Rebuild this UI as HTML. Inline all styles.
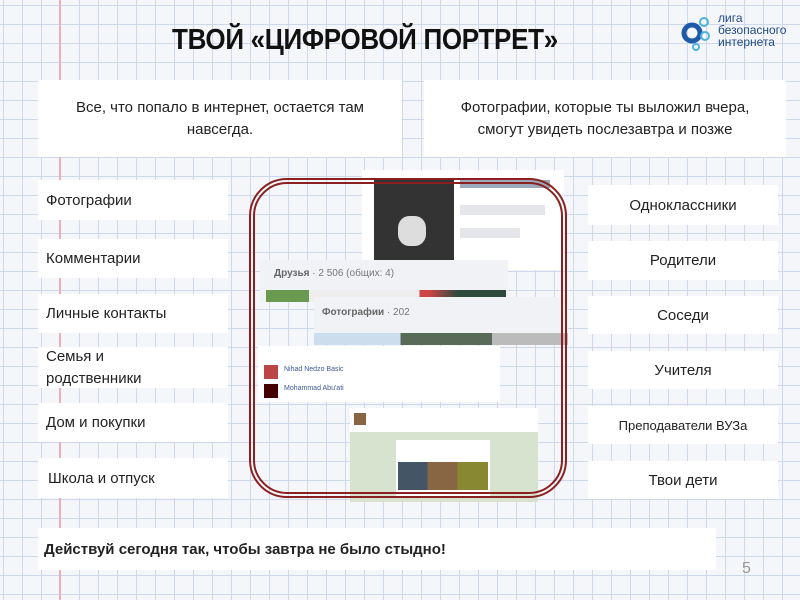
<!DOCTYPE html>
<html><head><meta charset="utf-8"><style>
body{margin:0;width:800px;height:600px;overflow:hidden;position:relative;font-family:"Liberation Sans",sans-serif;
background-color:#f5f6fa;
background-image:linear-gradient(90deg,transparent 59px,#eab0b8 59px,#eab0b8 61px,transparent 61px),
linear-gradient(#cdd8ea 1px,transparent 1px),linear-gradient(90deg,#cdd8ea 1px,transparent 1px);
background-size:800px 600px,19px 19px,19px 19px;background-position:0 0,0 5px,3px 0;}
.b{position:absolute;background:#fff;font-size:15px;color:#222;box-sizing:border-box;}
.l{left:38px;width:190px;padding-left:8px;display:flex;align-items:center;}
.r{left:588px;width:190px;display:flex;align-items:center;justify-content:center;}
.t{top:80px;height:77px;display:flex;align-items:center;justify-content:center;text-align:center;line-height:22px;}
h1{position:absolute;left:172px;top:22px;margin:0;font-size:26px;font-weight:bold;color:#111;transform:scaleY(1.12);transform-origin:left top;letter-spacing:-0.3px}
</style></head><body>
<h1>ТВОЙ «ЦИФРОВОЙ ПОРТРЕТ»</h1>
<svg style="position:absolute;left:680px;top:12px" width="36" height="42"><circle cx="12" cy="21" r="8" fill="none" stroke="#1f5aa6" stroke-width="5"/><circle cx="24" cy="10" r="4" fill="none" stroke="#4fb3e0" stroke-width="2"/><circle cx="25" cy="24" r="4" fill="none" stroke="#4fb3e0" stroke-width="2"/><circle cx="16" cy="35" r="3" fill="none" stroke="#4fb3e0" stroke-width="2"/></svg>
<div style="position:absolute;left:718px;top:12px;font-size:12px;line-height:12px;color:#1f4a86">лига<br>безопасного<br>интернета</div>
<div class="b t" style="left:38px;width:364px">Все, что попало в интернет, остается там<br>навсегда.</div>
<div class="b t" style="left:424px;width:362px">Фотографии, которые ты выложил вчера,<br>смогут увидеть послезавтра и позже</div>
<div class="b l" style="top:180px;height:40px">Фотографии</div>
<div class="b l" style="top:239px;height:39px">Комментарии</div>
<div class="b l" style="top:294px;height:39px">Личные контакты</div>
<div class="b l" style="top:347px;height:41px;line-height:22px">Семья и<br>родственники</div>
<div class="b l" style="top:403px;height:39px">Дом и покупки</div>
<div class="b l" style="top:458px;height:40px;padding-left:10px">Школа и отпуск</div>
<div class="b r" style="top:185px;height:40px">Одноклассники</div>
<div class="b r" style="top:241px;height:39px">Родители</div>
<div class="b r" style="top:296px;height:38px">Соседи</div>
<div class="b r" style="top:351px;height:38px">Учителя</div>
<div class="b r" style="top:406px;height:38px;font-size:13px">Преподаватели ВУЗа</div>
<div class="b r" style="top:461px;height:38px">Твои дети</div>
<div class="b" style="left:38px;top:528px;width:678px;height:42px;display:flex;align-items:center;padding-left:6px;font-weight:bold">Действуй сегодня так, чтобы завтра не было стыдно!</div>
<div style="position:absolute;left:742px;top:560px;font-size:16px;color:#999">5</div>
<div style="position:absolute;left:362px;top:170px;width:202px;height:100px;background:#fff"><div style="position:absolute;left:12px;top:8px;width:80px;height:88px;background:#333"><div style="position:absolute;left:24px;top:38px;width:28px;height:30px;background:#ddd;border-radius:40%"></div></div><div style="position:absolute;left:98px;top:10px;width:90px;height:8px;background:#9aa9bb"></div><div style="position:absolute;left:98px;top:35px;width:85px;height:10px;background:#e4e6ea"></div><div style="position:absolute;left:98px;top:58px;width:60px;height:10px;background:#e4e6ea"></div></div>
<div style="position:absolute;left:260px;top:260px;width:248px;height:42px;background:#f0f2f5;font-size:10px;color:#777;padding:8px 0 0 14px;box-sizing:border-box"><b style="color:#666">Друзья</b> · 2 506 (общих: 4)<div style="position:absolute;left:6px;top:30px;width:240px;height:12px;background:linear-gradient(90deg,#6a9a50 18%,#eee 18% 64%,#c44 64% 68%,#2d4a3d 80%)"></div></div>
<div style="position:absolute;left:314px;top:297px;width:254px;height:48px;background:#f0f2f5;font-size:10px;color:#777;padding:10px 0 0 8px;box-sizing:border-box"><b style="color:#666">Фотографии</b> · 202<div style="position:absolute;left:0;top:36px;width:254px;height:12px;background:linear-gradient(90deg,#cde 34%,#5a6a58 34% 70%,#bbb 70%)"></div></div>
<div style="position:absolute;left:258px;top:346px;width:242px;height:56px;background:#fff;font-size:7px;color:#3b5998"><div style="position:absolute;left:6px;top:19px;width:14px;height:14px;background:#b44"></div><div style="position:absolute;left:6px;top:38px;width:14px;height:14px;background:#400"></div><div style="position:absolute;left:26px;top:20px">Nihad Nedzo Basic</div><div style="position:absolute;left:26px;top:39px">Mohammad Abu'ati</div></div>
<div style="position:absolute;left:350px;top:408px;width:188px;height:94px;background:#fff"><div style="position:absolute;left:4px;top:5px;width:12px;height:12px;background:#864"></div><div style="position:absolute;left:0;top:24px;width:188px;height:70px;background:#d7e3cf"><div style="position:absolute;left:46px;top:8px;width:94px;height:58px;background:#fff"><div style="position:absolute;left:2px;top:22px;width:90px;height:28px;background:linear-gradient(90deg,#456 33%,#864 33% 66%,#883 66%)"></div></div></div></div>
<div style="position:absolute;left:249px;top:178px;width:318px;height:320px;box-sizing:border-box;border:6px double #8a2020;border-radius:38px"></div>
</body></html>
